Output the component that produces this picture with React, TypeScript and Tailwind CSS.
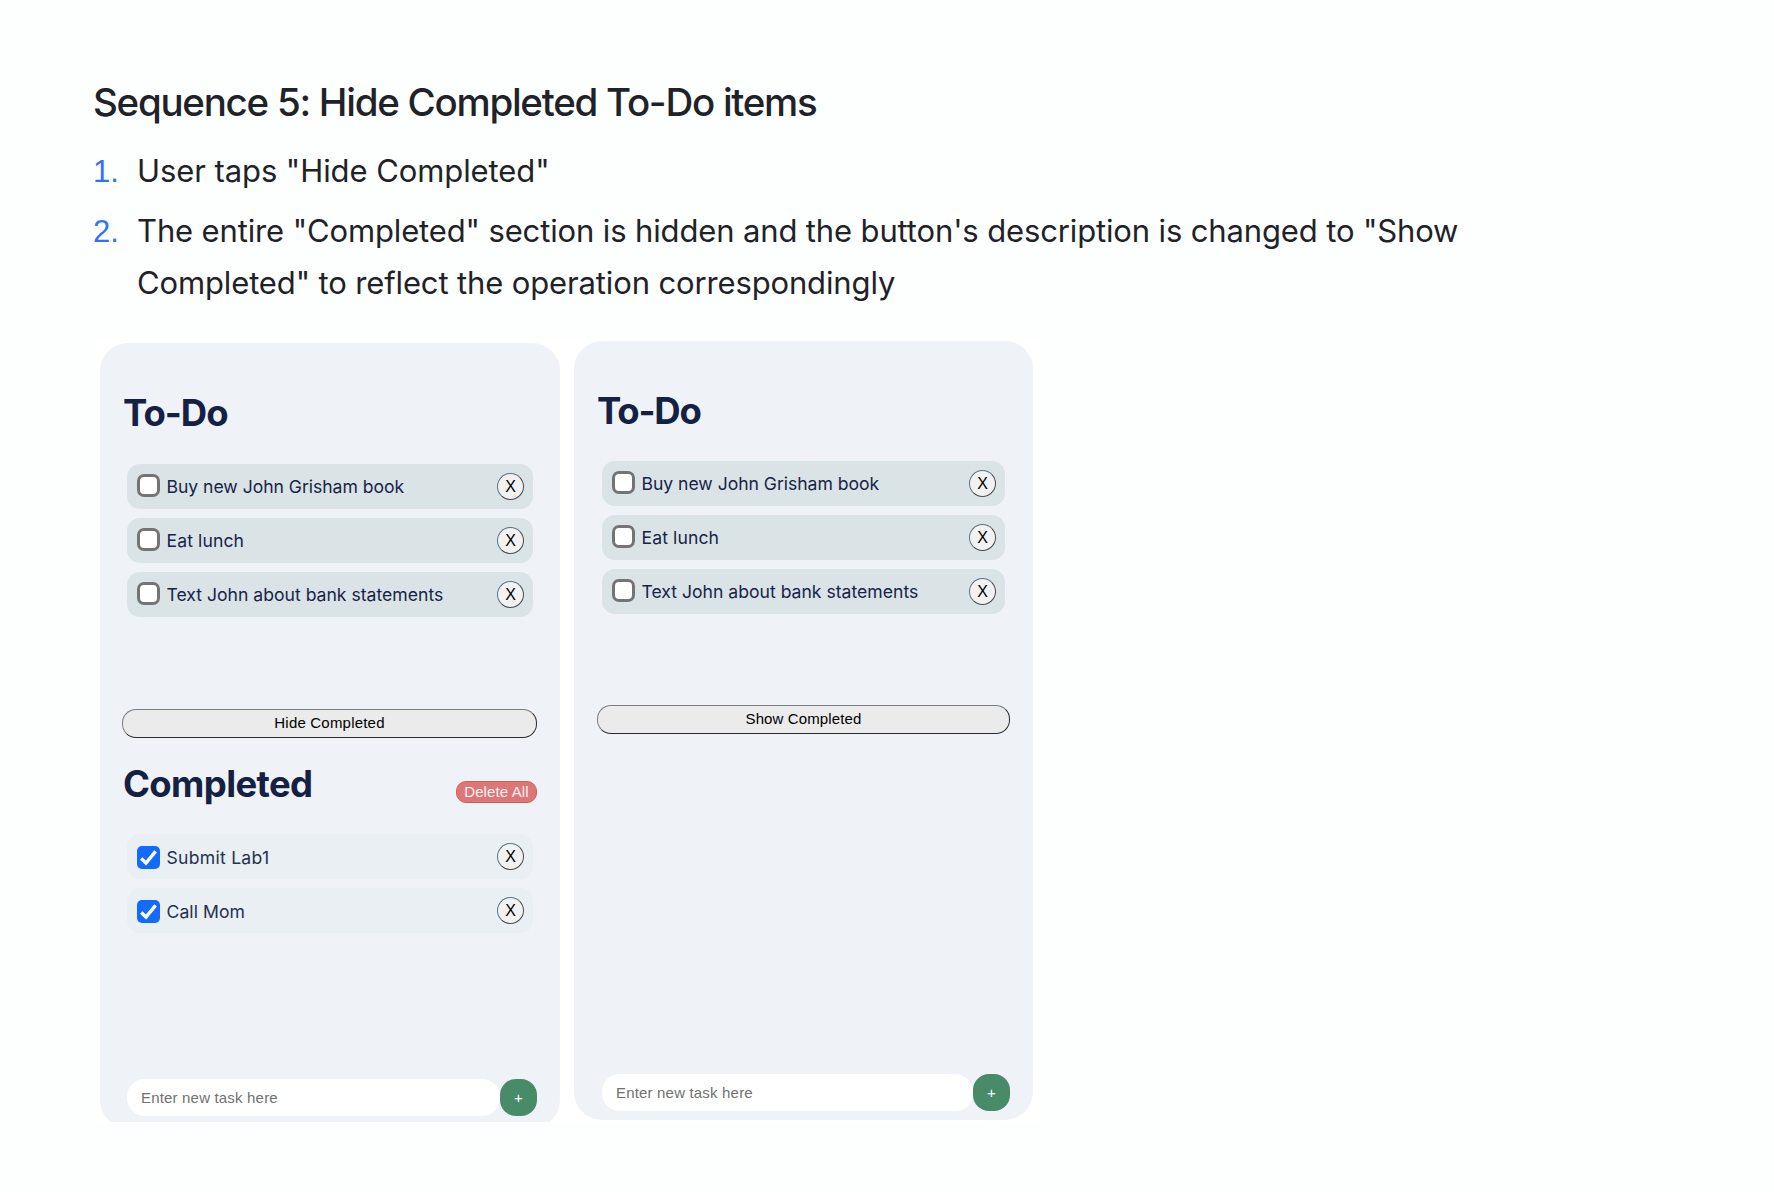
type Task = { text: string; spacing: string };

const todoTasks: Task[] = [
  { text: "Buy new John Grisham book", spacing: "tracking-[-0.036px]" },
  { text: "Eat lunch", spacing: "tracking-[0.1px]" },
  { text: "Text John about bank statements", spacing: "" },
];

const doneTasks: Task[] = [
  { text: "Submit Lab1", spacing: "tracking-[0.26px]" },
  { text: "Call Mom", spacing: "tracking-[0.05px]" },
];

const arial = "font-['Liberation_Sans',Arial,sans-serif]";

function Checkbox({ checked }: { checked: boolean }) {
  if (!checked) {
    return (
      <span className="-mt-[2px] size-[23px] shrink-0 rounded-[7px] border-[3px] border-[#747474] bg-white" />
    );
  }
  return (
    <span className="mt-px flex size-[23px] shrink-0 rounded-[5px] bg-[#126bfb]">
      <svg viewBox="0 0 23 23" className="size-[23px]" fill="none">
        <path d="M4.2 12.4 L9 17 L18.6 5.4" stroke="#fff" strokeWidth="3.4" />
      </svg>
    </span>
  );
}

function Row({ task, done }: { task: Task; done: boolean }) {
  return (
    <li
      className={`flex h-[45px] items-center rounded-[13px] pl-[10px] pr-[9px] ${
        done ? "bg-[#eaeff4]" : "bg-[#dae3e6]"
      }`}
    >
      <Checkbox checked={done} />
      <span
        className={`ml-[6.5px] grow whitespace-nowrap text-[17.6px] leading-[22px] ${
          done ? "mt-[2px] text-[#24314f]" : "text-[#162447]"
        } ${task.spacing}`}
      >
        {task.text}
      </span>
      <button
        className={`flex size-[27px] items-center justify-center rounded-full border border-t-[#587583] border-l-[#587583] border-r-[#4b4b4d] border-b-[#4b4b4d] bg-[#f2f2f2] text-[16px] leading-none text-black ${arial}`}
      >
        X
      </button>
    </li>
  );
}

function TaskList({ tasks, done = false }: { tasks: Task[]; done?: boolean }) {
  return (
    <ul className="flex flex-col gap-[9px]">
      {tasks.map((t) => (
        <Row key={t.text} task={t} done={done} />
      ))}
    </ul>
  );
}

function ToggleButton({ label, spacing }: { label: string; spacing: string }) {
  return (
    <button
      className={`flex h-[29px] w-full shrink-0 items-center justify-center rounded-[14px] border border-t-[#7b7e80] border-l-[#7b7e80] border-r-[#2b2b2b] border-b-[#2b2b2b] bg-[#ebebeb] text-[15px] text-black ${arial} ${spacing}`}
    >
      {label}
    </button>
  );
}

function NewTask() {
  return (
    <div className="mt-auto flex h-[37px] pl-[5px]">
      <div
        className={`flex grow items-center rounded-[18px] bg-white pl-[14px] pt-[2px] text-[15px] tracking-[0.18px] text-[#717171] ${arial}`}
      >
        Enter new task here
      </div>
      <button
        className={`flex size-[37px] items-center justify-center rounded-[16px] bg-[#488b68] pt-px text-[15px] text-white ${arial}`}
      >
        +
      </button>
    </div>
  );
}

const heading = "text-[36.5px] font-bold leading-[44px] text-[#142143]";

export default function App() {
  return (
    <main className="h-[1192px] w-[1774px] overflow-hidden bg-[#fdfefe] pl-[93px] pt-[76px] font-[Inter,sans-serif] text-[#1f2329]">
      <h1 className="h-[52px] whitespace-nowrap text-[38.5px] font-medium leading-[52px] tracking-[-1.27px]">
        Sequence 5: Hide Completed To-Do items
      </h1>

      <ol className="mt-[17px] flex flex-col gap-2 text-[31px] leading-[52px]">
        <li className="flex">
          <span className={`-mb-px w-[44px] shrink-0 pt-px text-[#3370ff] ${arial}`}>1.</span>
          <span className="whitespace-nowrap tracking-[-0.08px]">User taps "Hide Completed"</span>
        </li>
        <li className="flex">
          <span className={`w-[44px] shrink-0 pt-px text-[#3370ff] ${arial}`}>2.</span>
          <span className="whitespace-nowrap tracking-[-0.135px]">
            The entire "Completed" section is hidden and the button's description is changed to "Show
            <br />
            Completed" to reflect the operation correspondingly
          </span>
        </li>
      </ol>

      <div className="ml-[3px] mt-[29px] flex w-[944px] items-start gap-[14px] bg-white pl-[4px]">
        <section className="mt-[5px] h-[779px] w-[460px] overflow-hidden">
          <div className="flex h-[785px] flex-col rounded-[28px] bg-[#eff3f8] pb-[12px] pl-[22px] pr-[23px] pt-[48px]">
            <h2 className={`${heading} pl-px tracking-[-1.05px]`}>To-Do</h2>
            <div className="ml-[5px] mr-[4px] mt-[29px]">
              <TaskList tasks={todoTasks} />
            </div>
            <div className="mt-[92px]">
              <ToggleButton label="Hide Completed" spacing="tracking-[0.2px]" />
            </div>
            <div className="mt-[24px] flex items-start justify-between">
              <h2 className={`${heading} pl-px tracking-[-0.636px]`}>Completed</h2>
              <button
                className={`mt-[19px] flex h-[22px] w-[81px] items-center justify-center rounded-[10px] border border-[#d95a5a] bg-[#dc7777] text-[15px] tracking-[0.12px] text-[#fdf1f2] ${arial}`}
              >
                Delete All
              </button>
            </div>
            <div className="ml-[5px] mr-[4px] mt-[28px]">
              <TaskList tasks={doneTasks} done />
            </div>
            <NewTask />
          </div>
        </section>

        <section className="mt-[3px] flex h-[779px] w-[459px] flex-col rounded-[28px] bg-[#eff3f8] pb-[9px] pl-[23px] pr-[23px] pt-[48px]">
          <h2 className={`${heading} tracking-[-1.2px]`}>To-Do</h2>
          <div className="mx-[5px] mt-[28px]">
            <TaskList tasks={todoTasks} />
          </div>
          <div className="mt-[91px]">
            <ToggleButton label="Show Completed" spacing="tracking-[0.12px]" />
          </div>
          <NewTask />
        </section>
      </div>
    </main>
  );
}
